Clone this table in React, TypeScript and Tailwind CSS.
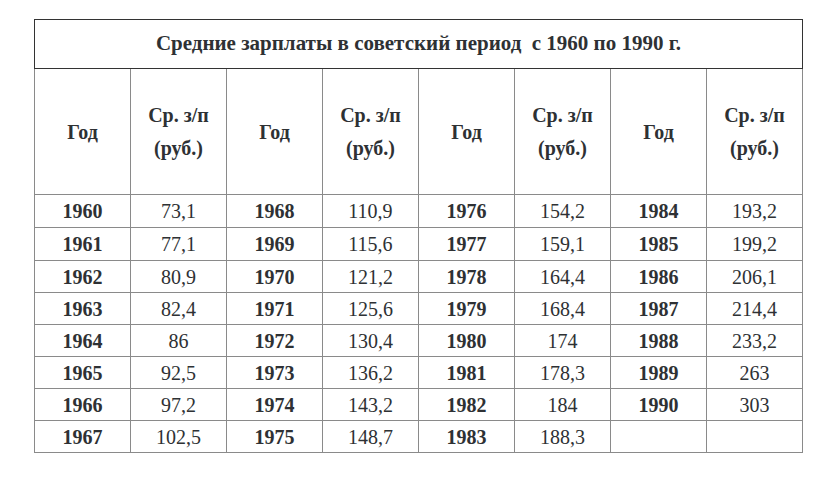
const rows: [string, string][][] = [
  [["1960", "73,1"], ["1968", "110,9"], ["1976", "154,2"], ["1984", "193,2"]],
  [["1961", "77,1"], ["1969", "115,6"], ["1977", "159,1"], ["1985", "199,2"]],
  [["1962", "80,9"], ["1970", "121,2"], ["1978", "164,4"], ["1986", "206,1"]],
  [["1963", "82,4"], ["1971", "125,6"], ["1979", "168,4"], ["1987", "214,4"]],
  [["1964", "86"], ["1972", "130,4"], ["1980", "174"], ["1988", "233,2"]],
  [["1965", "92,5"], ["1973", "136,2"], ["1981", "178,3"], ["1989", "263"]],
  [["1966", "97,2"], ["1974", "143,2"], ["1982", "184"], ["1990", "303"]],
  [["1967", "102,5"], ["1975", "148,7"], ["1983", "188,3"], ["", ""]],
];

// cells set font and colour themselves (tables may not inherit them)
const cell =
  "border border-[#8a8a8a] text-center align-middle p-0 font-['Liberation_Serif',serif] text-[#2e3134]";

export default function App() {
  return (
    <div className="min-h-[479px] bg-white pl-[34px] pt-[19px]">
      <table className="w-[768px] table-fixed border-collapse border border-[#333] font-['Liberation_Serif',serif]">
        <colgroup>
          {Array.from({ length: 8 }).map((_, i) => (
            <col key={i} className="w-[96px]" />
          ))}
        </colgroup>
        <tbody>
          <tr className="h-[49px]">
            <td colSpan={8} className={`${cell} border-[#333] text-[21px] font-bold`}>
              Средние зарплаты в советский период&nbsp; с 1960 по 1990 г.
            </td>
          </tr>
          <tr className="h-[126px]">
            {Array.from({ length: 4 }).map((_, i) => (
              <>
                <td key={`g${i}`} className={`${cell} text-[20px] font-bold`}>
                  Год
                </td>
                <td key={`s${i}`} className={`${cell} text-[20px] font-bold leading-[33px]`}>
                  Ср. з/п
                  <br />
                  (руб.)
                </td>
              </>
            ))}
          </tr>
          {rows.map((row, r) => (
            <tr key={r} className={r < 2 ? "h-[33px]" : "h-[32px]"}>
              {row.map(([year, value], i) => (
                <>
                  <td key={`y${i}`} className={`${cell} text-[20px] leading-[28px] font-bold`}>
                    {year}
                  </td>
                  <td key={`v${i}`} className={`${cell} text-[20px] leading-[28px]`}>
                    {value}
                  </td>
                </>
              ))}
            </tr>
          ))}
        </tbody>
      </table>
    </div>
  );
}
